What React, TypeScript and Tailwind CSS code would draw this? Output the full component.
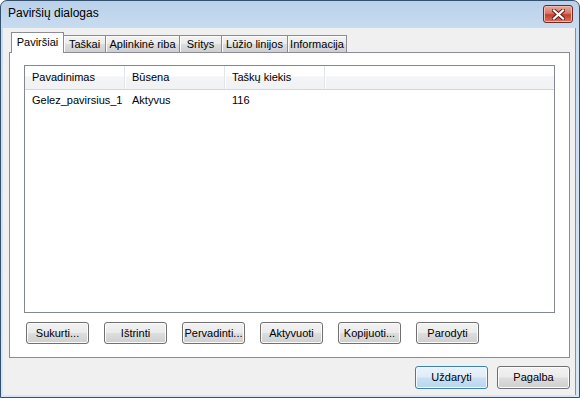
import clsx from 'clsx'

const TABS = [
  { label: 'Paviršiai', w: 'w-[53px]', active: true },
  { label: 'Taškai', w: 'w-[43px]' },
  { label: 'Aplinkinė riba', w: 'w-[75px]' },
  { label: 'Sritys', w: 'w-[43px]' },
  { label: 'Lūžio linijos', w: 'w-[67px]' },
  { label: 'Informacija', w: 'w-[60px]' },
]

const COLS = ['Pavadinimas', 'Būsena', 'Taškų kiekis']
const ROW = ['Gelez_pavirsius_1', 'Aktyvus', '116']

const ACTIONS = ['Sukurti...', 'Ištrinti', 'Pervadinti...', 'Aktyvuoti', 'Kopijuoti...', 'Parodyti']

function Button({ label, wide, primary }: { label: string; wide?: boolean; primary?: boolean }) {
  return (
    <button
      className={clsx(
        'flex items-center justify-center rounded-[3px] border text-[11px] leading-none text-black',
        wide ? 'h-[23px] w-[73px]' : 'h-[22px] w-[63px]',
        primary
          ? 'border-[#3c7fb1] bg-[linear-gradient(#eaf3fb_0%,#dfecf7_48%,#c9e0f2_52%,#b9d6ee_100%)] shadow-[inset_0_0_0_1px_#f4fafe]'
          : 'border-[#707070] bg-[linear-gradient(#f2f2f2_0%,#ebebeb_48%,#dddddd_52%,#cfcfcf_100%)] shadow-[inset_0_0_0_1px_#fbfbfb]',
      )}
    >
      {label}
    </button>
  )
}

export default function App() {
  return (
    <div className="flex h-[398px] w-[580px] flex-col overflow-hidden rounded-t-[7px] border border-[#34506d] bg-[linear-gradient(#b9d1ea_0px,#c9dcf0_28px,#d8e6f4_100%)] font-['Liberation_Sans',Arial,sans-serif]">
      {/* Title bar */}
      <div className="flex h-[27px] shrink-0 items-start justify-between pl-[7px] pr-[6px]">
        <span className="pt-[4px] text-[12px] leading-[16px] text-black">Paviršių dialogas</span>
        <div className="mt-[4px] flex h-[18px] w-[30px] items-center justify-center rounded-[3px] border border-[#6d2a23] bg-[linear-gradient(#e8a89c_0%,#d8786a_45%,#c3402f_55%,#d5725e_100%)] shadow-[inset_0_0_0_1px_#efbcb3]">
          <svg width="13" height="11" viewBox="0 0 13 11">
            <path d="M2 1.5 L11 9.5 M11 1.5 L2 9.5" stroke="#5a1d16" strokeWidth="4" strokeLinecap="square" />
            <path d="M2 1.5 L11 9.5 M11 1.5 L2 9.5" stroke="#ffffff" strokeWidth="2.2" strokeLinecap="square" />
          </svg>
        </div>
      </div>

      {/* Client area */}
      <div className="ml-[2px] mr-[3px] mb-[2px] flex flex-1 flex-col border-r border-[#3aa6e6] bg-[#f0f0f0] pr-[5px]">
        {/* Tabs */}
        <div className="ml-[8px] mt-[4px] flex h-[20px] items-end">
          {TABS.map(t => (
            <div
              key={t.label}
              className={clsx(
                'flex shrink-0 items-center justify-center border-x border-t border-[#898c95] text-[11px] leading-none text-black',
                t.w,
                t.active
                  ? 'relative z-10 -mb-px h-[21px] bg-white pb-[2px]'
                  : '-ml-px h-[17px] bg-[linear-gradient(#f3f3f3_0%,#ebebeb_50%,#dddddd_51%,#cfcfcf_100%)] pt-[1px] shadow-[inset_1px_1px_0_#fbfbfb]',
              )}
            >
              {t.label}
            </div>
          ))}
        </div>

        {/* Panel */}
        <div className="ml-[6px] flex h-[306px] flex-col border border-[#898c95] bg-white pl-[14px] pr-[14px] pt-[12px]">
          {/* List */}
          <div className="flex h-[248px] flex-col border border-[#828790] bg-white">
            <div className="flex h-[24px] border-b border-[#d5d5d5] bg-[linear-gradient(#ffffff_0%,#ffffff_45%,#f3f4f6_46%,#f1f2f4_100%)]">
              {COLS.map(c => (
                <div
                  key={c}
                  className="flex w-[100px] items-center border-r border-[#e2e6eb] pl-[7px] text-[11px] text-black shadow-[1px_0_0_#ffffff]"
                >
                  {c}
                </div>
              ))}
            </div>
            <div className="flex h-[20px] items-center">
              {ROW.map(c => (
                <div key={c} className="w-[100px] pl-[7px] text-[11px] text-black">
                  {c}
                </div>
              ))}
            </div>
          </div>

          {/* Action buttons */}
          <div className="ml-[2px] mt-[9px] flex gap-[15px]">
            {ACTIONS.map(a => (
              <Button key={a} label={a} />
            ))}
          </div>
        </div>

        {/* Dialog buttons */}
        <div className="mt-[8px] flex justify-end gap-[9px]">
          <Button label="Uždaryti" wide primary />
          <Button label="Pagalba" wide />
        </div>
      </div>
    </div>
  )
}
